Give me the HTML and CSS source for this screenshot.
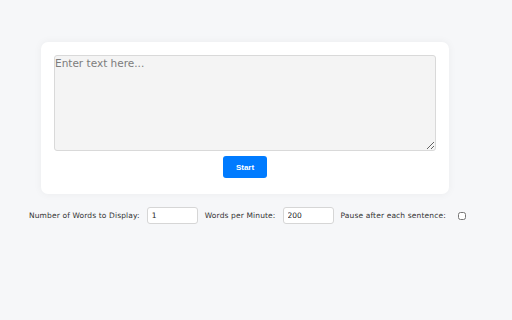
FILE: index.html
```html
<!DOCTYPE html>
<html lang="en">
<head>
    <meta charset="UTF-8">
    <meta name="viewport" content="width=device-width, initial-scale=1.0">
    <title>Speed Reader</title>
    <link rel="stylesheet" href="styles.css">
</head>
<body>
    <div class="card">
        <textarea id="text-input" placeholder="Enter text here..."></textarea>
        <button id="start-btn">Start</button>
    </div>

    <div class="settings">
        <label for="word-count">Number of Words to Display:</label>
        <input type="number" id="word-count" value="1">
        <label for="wpm">Words per Minute:</label>
        <input type="number" id="wpm" value="200">
        <label for="pause">Pause after each sentence:</label>
        <input type="checkbox" id="pause">
    </div>
</body>
</html>
```

FILE: styles.css
```css
body {
    font-family: "DejaVu Sans", Verdana, sans-serif;
    background: #f6f7f9;
    margin: 0;
    padding: 42px 0 0 0;
}
.card {
    width: 408px;
    box-sizing: border-box;
    margin-left: 41px;
    background: white;
    padding: 13px 13px 16px;
    border-radius: 7px;
    box-shadow: 0 0 8px rgba(0, 0, 0, 0.05);
    display: flex;
    flex-direction: column;
    align-items: center;
}
textarea {
    display: block;
    width: 100%;
    height: 96px;
    box-sizing: border-box;
    margin: 0;
    padding: 1px 0;
    background: #f4f4f4;
    border: 1px solid #d9d9d9;
    border-radius: 3px;
    font-family: "DejaVu Sans", Verdana, sans-serif;
    font-size: 10.5px;
    resize: vertical;
}
textarea::placeholder {
    color: #7c7c7c;
}
#start-btn {
    margin-top: 5px;
    width: 44px;
    height: 22px;
    background: #007bff;
    color: white;
    border: none;
    border-radius: 3px;
    font-family: "Liberation Sans", Arial, sans-serif;
    font-weight: bold;
    font-size: 8px;
    cursor: pointer;
}
.settings {
    display: flex;
    align-items: center;
    gap: 7px;
    margin-top: 13px;
    padding-left: 29px;
    font-size: 7.5px;
    letter-spacing: 0.13px;
    color: #333;
}
.settings input[type="number"] {
    width: 51px;
    height: 17px;
    box-sizing: border-box;
    margin: 0;
    padding: 0 4px;
    border: 1px solid #d6d6d6;
    border-radius: 3px;
    background: white;
    font-family: "DejaVu Sans", Verdana, sans-serif;
    font-size: 7.5px;
    color: #222;
    -moz-appearance: textfield;
}
.settings input::-webkit-outer-spin-button,
.settings input::-webkit-inner-spin-button {
    -webkit-appearance: none;
    margin: 0;
}
.settings input[type="checkbox"] {
    margin: 0 0 0 5px;
    width: 8px;
    height: 8px;
}
```
